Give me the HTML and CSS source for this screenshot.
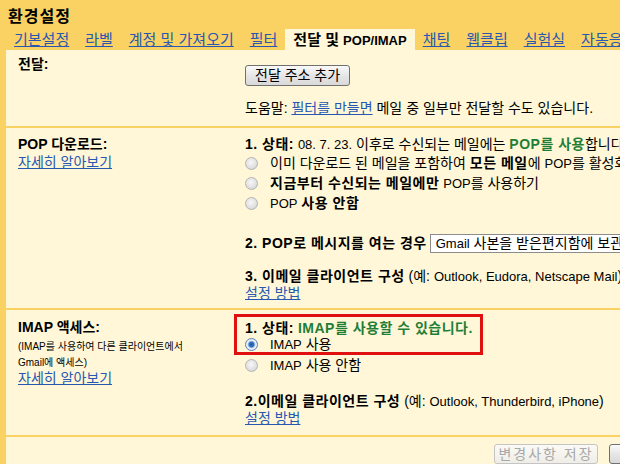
FILE: index.html
```html
<!DOCTYPE html>
<html lang="ko">
<head>
<meta charset="utf-8">
<title>환경설정</title>
<link rel="stylesheet" href="styles.css">
</head>
<body>
<div class="page">
  <div class="title">환경설정</div>
  <div class="tabs">
    <a class="tab" href="#">기본설정</a>
    <a class="tab" href="#">라벨</a>
    <a class="tab" href="#">계정 및 가져오기</a>
    <a class="tab" href="#">필터</a>
    <span class="tab active">전달 및 <span class="en">POP/IMAP</span></span>
    <a class="tab" href="#">채팅</a>
    <a class="tab" href="#">웹클립</a>
    <a class="tab" href="#">실험실</a>
    <a class="tab" href="#">자동응답</a>
  </div>
  <div class="main">
    <div class="section s1">
      <div class="label"><b>전달:</b></div>
      <div class="content">
        <button class="btn" type="button">전달 주소 추가</button>
        <div class="help">도움말: <a href="#">필터를 만들면</a> 메일 중 일부만 전달할 수도 있습니다.</div>
      </div>
    </div>
    <div class="section s2">
      <div class="label">
        <b>POP 다운로드:</b>
        <div class="learn"><a href="#">자세히 알아보기</a></div>
      </div>
      <div class="content">
        <div class="line"><b>1. 상태:</b> <span class="en">08. 7. 23.</span> 이후로 수신되는 메일에는 <b class="green">POP를 사용</b>합니다.</div>
        <div class="opt"><span class="radio"></span><span>이미 다운로드 된 메일을 포함하여 <b>모든 메일</b>에 <span class="en">POP</span>를 활성화하기</span></div>
        <div class="opt"><span class="radio"></span><span><b>지금부터 수신되는 메일에만</b> <span class="en">POP</span>를 사용하기</span></div>
        <div class="opt"><span class="radio"></span><span><span class="en">POP</span> <b>사용 안함</b></span></div>
        <div class="when"><b>2. POP로 메시지를 여는 경우</b><span class="select"><span class="en">Gmail</span> 사본을 받은편지함에 보관하기</span></div>
        <div class="line client"><b>3. 이메일 클라이언트 구성</b> (예: <span class="en">Outlook, Eudora, Netscape Mail</span>)</div>
        <div class="line"><a href="#">설정 방법</a></div>
      </div>
    </div>
    <div class="section s3">
      <div class="label">
        <b>IMAP 액세스:</b>
        <div class="small">(IMAP를 사용하여 다른 클라이언트에서<br>Gmail에 액세스)</div>
        <div class="learn2"><a href="#">자세히 알아보기</a></div>
      </div>
      <div class="content">
        <div class="highlight">
          <div class="line"><b>1. 상태:</b> <b class="green">IMAP를 사용할 수 있습니다.</b></div>
          <div class="opt tight"><span class="radio on"></span><span><span class="en">IMAP</span> 사용</span></div>
        </div>
        <div class="opt"><span class="radio"></span><span><span class="en">IMAP</span> 사용 안함</span></div>
        <div class="line client2"><b>2.이메일 클라이언트 구성</b> (예: <span class="en">Outlook, Thunderbird, iPhone</span>)</div>
        <div class="line"><a href="#">설정 방법</a></div>
      </div>
    </div>
    <div class="footer">
      <button class="btn save" type="button" disabled>변경사항 저장</button>
      <button class="btn cancel" type="button">취소</button>
    </div>
  </div>
</div>
</body>
</html>
```

FILE: styles.css
```css
html, body {
  margin: 0;
  padding: 0;
  overflow: hidden;
}
body {
  width: 620px;
  height: 464px;
  background: #fad163;
  font-family: "Liberation Sans", "Noto Sans CJK KR", sans-serif;
  font-size: 14px;
  color: #000;
}
a {
  color: #2658b2;
  text-decoration: underline;
}
.en {
  font-size: 13px;
}
.page {
  width: 860px;
  white-space: nowrap;
}
.title {
  padding: 7px 0 2px 8px;
  font-size: 16px;
  font-weight: bold;
  line-height: 20px;
  letter-spacing: 1px;
}
.tabs {
  display: flex;
  padding-left: 6px;
  height: 21px;
  line-height: 21px;
  font-size: 15px;
}
.tab {
  padding: 0 8px;
}
.tab.active {
  background: #fff7d7;
  color: #000;
  font-weight: bold;
}
.tab .en {
  font-size: 13px;
}
.main {
  margin-left: 6px;
  background: #fff7d7;
  min-height: 414px;
}
.section {
  display: grid;
  grid-template-columns: 239px 1fr;
  border-bottom: 2px solid #fad163;
}
.label {
  padding-left: 12px;
  line-height: 16px;
}
.content {
  line-height: 16px;
}
.content b {
  letter-spacing: 0.5px;
}
.green {
  color: #1f7f37;
}
.s1 { padding-bottom: 10px; }
.s1 .label { padding-top: 6px; }
.s1 .content { padding-top: 15px; }
.help { margin-top: 14px; }

.btn {
  font-family: "Liberation Sans", "Noto Sans CJK KR", sans-serif;
  font-size: 14px;
  height: 21px;
  padding: 0 9px;
  border: 1px solid #707070;
  border-radius: 3px;
  background: linear-gradient(#fafafa, #e6e6e6 50%, #d9d9d9);
  color: #000;
  display: block;
  line-height: 19px;
}

.s2 { padding-bottom: 7px; }
.s2 .label { padding-top: 8px; }
.s2 .content { padding-top: 8px; }
.learn { line-height: 20px; }

.opt {
  display: flex;
  align-items: center;
  height: 20px;
}
.opt.tight { height: 16px; }
.radio {
  flex: none;
  width: 13px;
  height: 13px;
  box-sizing: border-box;
  border-radius: 50%;
  border: 1px solid #b4b4b4;
  background: radial-gradient(circle at 45% 40%, #f7f7f7 0, #e2e2e2 55%, #c9c9c9 100%);
  margin-right: 12px;
}
.radio.on {
  border-color: #5b82b8;
  background: radial-gradient(circle at 50% 50%, #1d58a6 0, #2f6fc0 2.2px, #9fbde3 3.4px, #eef2f7 4.2px, #d7dde6 100%);
}
.when {
  margin-top: 19px;
  height: 22px;
  display: flex;
  align-items: center;
  gap: 3px;
}
.select {
  display: inline-block;
  box-sizing: border-box;
  height: 19px;
  width: 240px;
  border: 1px solid #8c8c8c;
  background: #fff;
  padding-left: 5px;
  line-height: 17px;
}
.client { margin-top: 14px; }

.s3 { padding-bottom: 9px; }
.s3 .label { padding-top: 9px; }
.s3 .content { padding-top: 4px; }
.small {
  font-size: 10px;
  line-height: 16px;
  margin-top: 4px;
}
.learn2 { line-height: 14px; }
.highlight {
  width: 249px;
  box-sizing: border-box;
  margin-left: -11px;
  border: 3px solid #e01010;
  padding: 3px 0 0 8px;
  height: 41px;
}
.client2 { margin-top: 18px; }

.footer {
  display: flex;
  gap: 11px;
  padding: 7px 0 0 488px;
}
.footer .btn {
  height: 20px;
  line-height: 18px;
}
.save {
  width: 104px;
  padding: 0;
  letter-spacing: 2px;
  color: #a8a8a8;
  border-color: #c4c4c4;
  background: linear-gradient(#fbfaf6, #efede6);
}
.cancel {
  width: 60px;
}
```
